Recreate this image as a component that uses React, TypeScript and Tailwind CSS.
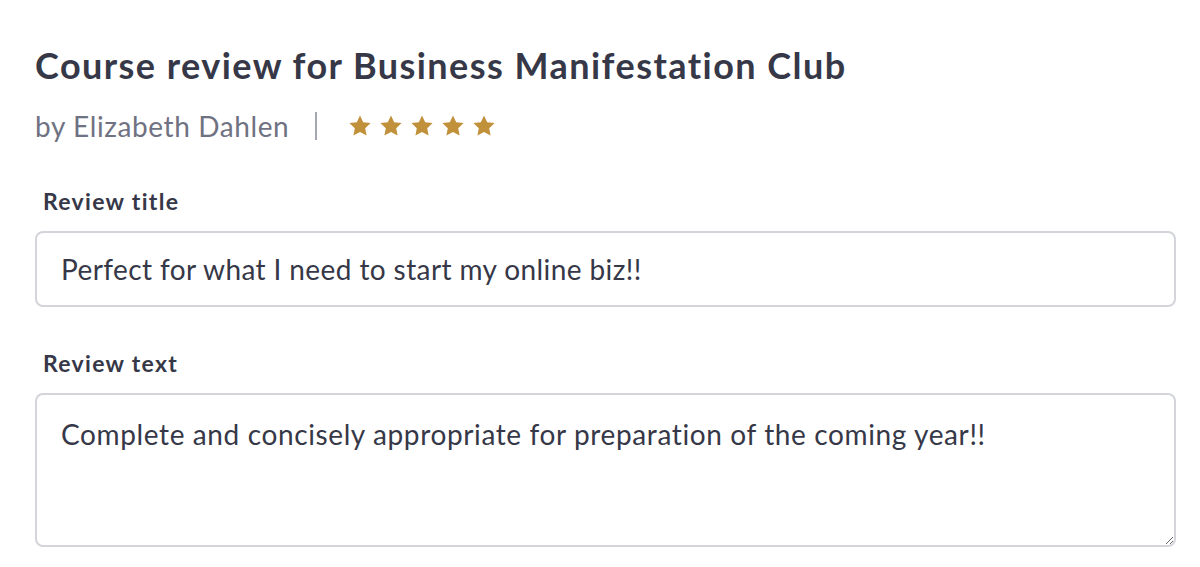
import { useState } from 'react';

function Star() {
  return (
    <svg viewBox="0 0 24 24" className="w-[24px] h-[24px]" fill="#c0913a">
      <path d="M12 1.5l3.2 6.7 7.4.9-5.4 5.1 1.4 7.3L12 18l-6.6 3.5 1.4-7.3-5.4-5.1 7.4-.9z" />
    </svg>
  );
}

export default function App() {
  const [title, setTitle] = useState('Perfect for what I need to start my online biz!!');
  const [text, setText] = useState('Complete and concisely appropriate for preparation of the coming year!!');

  return (
    <div className="min-h-screen bg-white pl-[35px] pr-[24px] pt-[42px] font-['Lato',sans-serif] text-[#363848]">
      <h1 className="text-[36px] font-bold leading-[46px] tracking-[1.45px]">
        Course review for Business Manifestation Club
      </h1>

      <div className="mt-[17px] flex items-center">
        <span className="text-[28px] tracking-[0.6px] text-[#6f7282]">by Elizabeth Dahlen</span>
        <span className="ml-[26px] h-[28px] w-[2px] bg-[#a5a7b1]" />
        <div className="ml-[31px] flex items-center gap-[7px]">
          {[0, 1, 2, 3, 4].map((i) => (
            <Star key={i} />
          ))}
        </div>
      </div>

      <label className="mt-[40px] block pl-[8px] text-[23px] font-bold leading-[28px] tracking-[1.3px]">
        Review title
      </label>
      <input
        value={title}
        onChange={(e) => setTitle(e.target.value)}
        className="mt-[16px] block h-[76px] w-full rounded-[8px] border-2 border-[#d4d5da] px-[24px] text-[28px] tracking-[0.4px] text-[#363848] outline-none"
      />

      <label className="mt-[42px] block pl-[8px] text-[23px] font-bold leading-[28px] tracking-[1.3px]">
        Review text
      </label>
      <textarea
        value={text}
        onChange={(e) => setText(e.target.value)}
        className="mt-[16px] block h-[154px] w-full rounded-[8px] border-2 border-[#d4d5da] px-[24px] py-[22px] text-[28px] leading-[34px] tracking-[0.62px] text-[#363848] outline-none"
      />
    </div>
  );
}
